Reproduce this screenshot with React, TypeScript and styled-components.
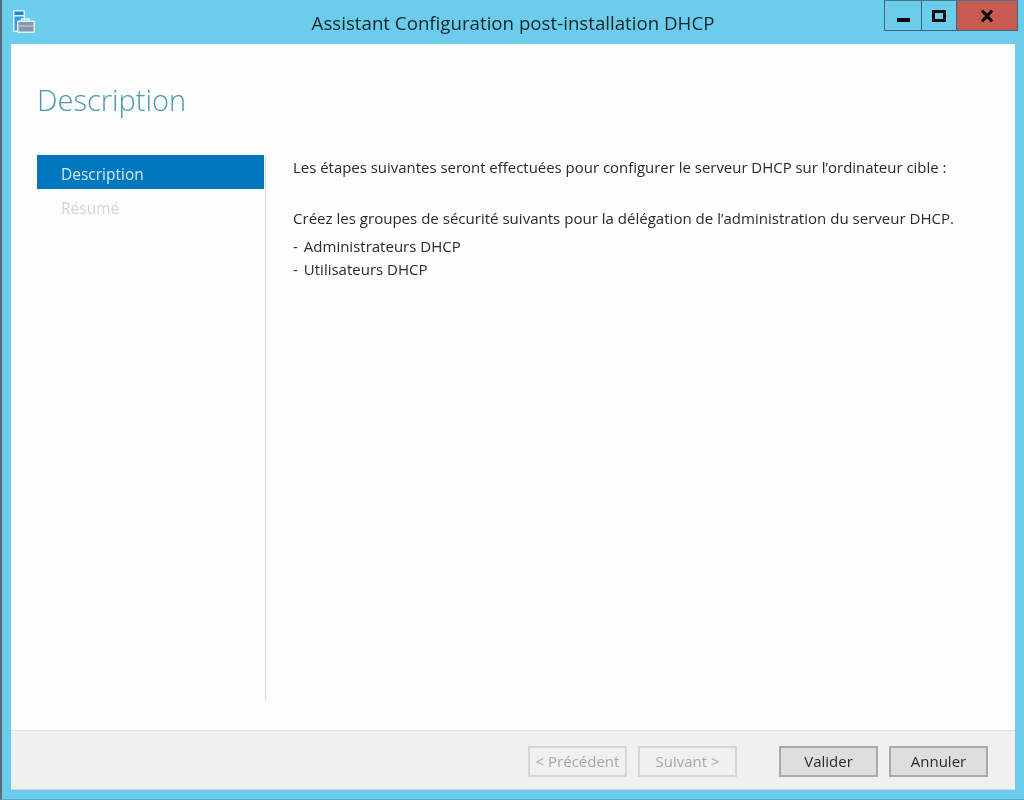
import React from "react"
import styled, { createGlobalStyle } from "styled-components"

const GlobalStyle = createGlobalStyle`
  html, body {
    margin: 0;
    padding: 0;
    background: #6bcdeb;
  }
`

const steps = [
  { label: "Description", active: true },
  { label: "Résumé", active: false },
]

const groups = ["Administrateurs DHCP", "Utilisateurs DHCP"]

const ServerIcon = () => (
  <svg width="24" height="24" viewBox="0 0 24 24">
    <rect x="0" y="0" width="12" height="22" rx="1.5" fill="#dff1f9" />
    <rect x="1.5" y="1.5" width="9" height="3.5" fill="#1f84d6" />
    <rect x="1.5" y="6.5" width="9" height="14" fill="#3a9be2" />
    <path d="M8.5 12 V9 H16 V12" fill="none" stroke="#e3f1f7" strokeWidth="1.5" />
    <rect x="4" y="10.5" width="18" height="12.5" rx="1.5" fill="#dff1f9" />
    <rect x="5.5" y="12" width="15" height="9.5" fill="#8698a8" />
    <rect x="5.5" y="15.5" width="15" height="1" fill="#c9d5dc" />
  </svg>
)

const App = () => {
  return (
    <Window>
      <GlobalStyle />
      <TitleBar>
        <IconSlot>
          <ServerIcon />
        </IconSlot>
        <Title>{"Assistant Configuration post-installation DHCP"}</Title>
        <Controls>
          <ControlButton width={36}>
            <MinimizeGlyph />
          </ControlButton>
          <ControlButton width={34}>
            <MaximizeGlyph />
          </ControlButton>
          <CloseButton>
            <svg width="12" height="12" viewBox="0 0 12 12">
              <path d="M1 0.5 L11 11.5 M11 0.5 L1 11.5" stroke="#0c0c0c" strokeWidth="3" />
            </svg>
          </CloseButton>
        </Controls>
      </TitleBar>

      <Panel>
        <Body>
          <Heading>{"Description"}</Heading>
          <Columns>
            <Sidebar>
              {steps.map((step) => (
                <Step key={step.label} active={step.active}>
                  {step.label}
                </Step>
              ))}
            </Sidebar>
            <Content>
              <Intro>
                {"Les étapes suivantes seront effectuées pour configurer le serveur DHCP sur l’ordinateur cible :"}
              </Intro>
              <Paragraph>
                {"Créez les groupes de sécurité suivants pour la délégation de l’administration du serveur DHCP."}
              </Paragraph>
              <List>
                {groups.map((group) => (
                  <ListItem key={group}>
                    <Dash>{"-"}</Dash>
                    {group}
                  </ListItem>
                ))}
              </List>
            </Content>
          </Columns>
        </Body>
        <Footer>
          <ButtonGroup>
            <Button disabled>{"< Précédent"}</Button>
            <Button disabled>{"Suivant >"}</Button>
          </ButtonGroup>
          <ButtonGroup>
            <Button>{"Valider"}</Button>
            <Button>{"Annuler"}</Button>
          </ButtonGroup>
        </Footer>
      </Panel>
    </Window>
  )
}

export default App

const Window = styled.div`
  width: 1024px;
  height: 800px;
  box-sizing: border-box;
  display: flex;
  flex-direction: column;
  background: #6bcdeb;
  border-left: 2px solid #5b6b73;
  border-bottom: 1px solid #58a9c2;
  padding: 0 9px 9px 9px;
  font-family: "Open Sans", "Noto Sans", sans-serif;
  overflow: hidden;
  filter: blur(0.35px);
`

const TitleBar = styled.div`
  height: 44px;
  flex: none;
  display: grid;
  grid-template-columns: 1fr auto 1fr;
  align-items: start;
`

const IconSlot = styled.div`
  height: 24px;
  padding: 10px 0 0 2px;
`

const Title = styled.div`
  font-size: 18.7px;
  line-height: 24px;
  padding-top: 11px;
  color: #14242b;
  white-space: nowrap;
`

const Controls = styled.div`
  justify-self: end;
  display: flex;
  height: 31px;
  margin: 0 -3px 0 0;
  box-sizing: border-box;
  border: 1px solid #3f6474;
  border-top-color: #4b7486;
`

const ControlButton = styled.div<{ width: number }>`
  width: ${(props) => props.width}px;
  display: flex;
  align-items: center;
  justify-content: center;
  border-right: 1px solid #3f6474;
`

const CloseButton = styled.div`
  width: 60px;
  display: flex;
  align-items: center;
  justify-content: center;
  background: #c75b52;
`

const MinimizeGlyph = styled.span`
  width: 13px;
  height: 4px;
  margin-top: 8px;
  background: #0a0a0a;
`

const MaximizeGlyph = styled.span`
  width: 8px;
  height: 6px;
  border: 3px solid #0a0a0a;
`

const Panel = styled.div`
  flex: 1;
  display: flex;
  flex-direction: column;
  background: #fdfdfd;
  min-height: 0;
`

const Body = styled.div`
  flex: 1;
  padding: 0 0 29px 26px;
  display: flex;
  flex-direction: column;
  min-height: 0;
`

const Heading = styled.h1`
  margin: 0;
  padding-top: 35px;
  height: 76px;
  box-sizing: border-box;
  font-family: "Open Sans", "Noto Sans", sans-serif;
  font-weight: 300;
  font-size: 29px;
  line-height: 42px;
  color: #4b98ad;
`

const Columns = styled.div`
  flex: 1;
  display: flex;
  margin-top: 35px;
  min-height: 0;
`

const Sidebar = styled.div`
  width: 228px;
  flex: none;
  border-right: 1px solid #dcdcdc;
`

const Step = styled.div<{ active: boolean }>`
  width: 227px;
  height: 34px;
  box-sizing: border-box;
  padding-left: 24px;
  font-size: 15.5px;
  line-height: 38px;
  color: ${(props) => (props.active ? "#d6e9f6" : "#d6d6d6")};
  background: ${(props) => (props.active ? "#0078be" : "transparent")};
`

const Content = styled.div`
  flex: 1;
  padding-left: 27px;
  font-size: 15px;
  color: #2a2a2a;
`

const Intro = styled.p`
  margin: 0;
  padding-top: 2px;
  font-size: 14.95px;
  line-height: 21px;
  white-space: nowrap;
`

const Paragraph = styled.p`
  margin: 0;
  padding-top: 30px;
  font-size: 15.05px;
  line-height: 21px;
  white-space: nowrap;
`

const List = styled.div`
  margin-top: 6px;
`

const ListItem = styled.div`
  line-height: 23px;
`

const Dash = styled.span`
  margin-right: 6px;
`

const Footer = styled.div`
  height: 60px;
  flex: none;
  box-sizing: border-box;
  display: flex;
  justify-content: flex-end;
  gap: 42px;
  padding: 15px 27px 0 0;
  background: #f0f0f0;
  border-top: 1px solid #e2e2e2;
  border-bottom: 1px solid #d5d8da;
`

const ButtonGroup = styled.div`
  display: flex;
  gap: 11px;
`

const Button = styled.button`
  width: 99px;
  height: 31px;
  padding: 0 0 2px;
  box-sizing: border-box;
  font-family: "Open Sans", "Noto Sans", sans-serif;
  font-size: 15px;
  color: #2a2a2a;
  background: #dedede;
  border: 2px solid #a9a9a9;

  &:disabled {
    color: #a8a8a8;
    background: #f0f0f0;
    border-color: #d6d6d6;
  }
`
